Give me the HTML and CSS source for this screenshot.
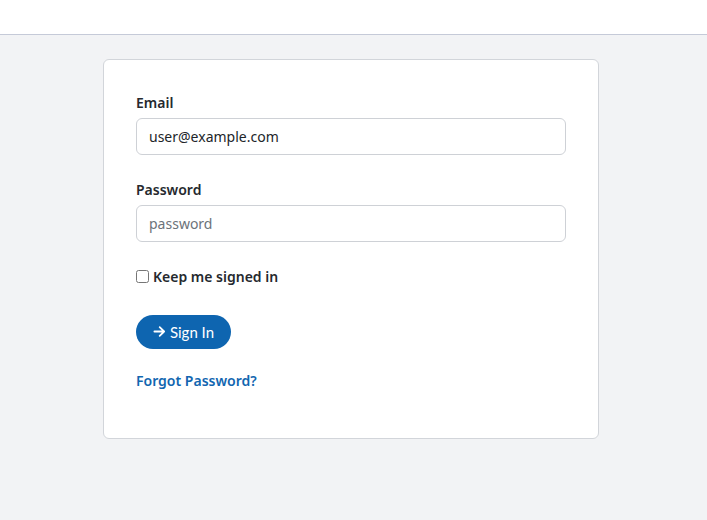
FILE: index.html
```html
<!DOCTYPE html>
<html lang="en">
<head>
<meta charset="utf-8">
<title>Sign In</title>
<link rel="stylesheet" href="styles.css">
</head>
<body>
<header class="topbar"></header>
<main class="page">
  <form class="card">
    <label class="field-label" for="email">Email</label>
    <input class="field-input" id="email" type="text" value="user@example.com">
    <label class="field-label second" for="password">Password</label>
    <input class="field-input" id="password" type="password" placeholder="password">
    <label class="remember">
      <input class="check" type="checkbox">
      <span>Keep me signed in</span>
    </label>
    <button class="btn" type="button">
      <svg class="btn-icon" viewBox="0 0 14 14" width="13" height="13" aria-hidden="true"><path d="M1.5 7h10.5M7.2 2.3L12 7l-4.8 4.7" fill="none" stroke="#fff" stroke-width="1.9" stroke-linecap="round" stroke-linejoin="round"/></svg>
      <span>Sign In</span>
    </button>
    <a class="forgot" href="#">Forgot Password?</a>
  </form>
</main>
</body>
</html>
```

FILE: styles.css
```css
* { box-sizing: border-box; }
html, body {
  margin: 0;
  padding: 0;
  height: 100%;
}
body {
  background: #f2f3f5;
  font-family: "Noto Sans", "Open Sans", sans-serif;
  color: #212529;
}
.topbar {
  height: 35px;
  background: #fff;
  border-bottom: 1px solid #c5cad8;
}
.page {
  padding: 24px 0 0 103px;
}
.card {
  width: 496px;
  background: #fff;
  border: 1px solid #d2d5da;
  border-radius: 6px;
  padding: 32px 32px 47px 32px;
  display: flex;
  flex-direction: column;
  align-items: flex-start;
}
.field-label {
  font-size: 14px;
  line-height: 21px;
  font-weight: 560;
  color: #25292e;
  margin-bottom: 5px;
}
.field-label.second {
  margin-top: 24px;
}
.field-input {
  width: 100%;
  height: 37px;
  border: 1px solid #ced1d6;
  border-radius: 6px;
  padding: 0 12px;
  font-family: "Noto Sans", "Open Sans", sans-serif;
  font-size: 14px;
  color: #212529;
  background: #fff;
  outline: none;
}
.field-input::placeholder {
  color: #6c737a;
}
.remember {
  margin-top: 24px;
  display: flex;
  align-items: center;
  gap: 4px;
  font-size: 14px;
  line-height: 21px;
  font-weight: 560;
  color: #25292e;
}
.check {
  margin: 0;
  width: 13px;
  height: 13px;
}
.btn {
  margin-top: 28px;
  height: 34px;
  width: 95px;
  border: none;
  border-radius: 17px;
  background: #0e65b0;
  color: #fff;
  font-family: Lato, "Open Sans", sans-serif;
  font-size: 15px;
  display: flex;
  align-items: center;
  justify-content: center;
  gap: 4px;
  padding: 0 0 1px 0;
}
.btn-icon {
  display: block;
}
.forgot {
  margin-top: 21px;
  font-size: 14px;
  line-height: 21px;
  font-weight: 560;
  color: #1166b0;
  text-decoration: none;
}
```
